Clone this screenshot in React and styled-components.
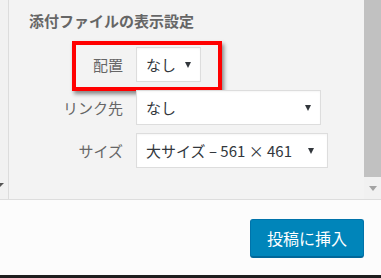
import React from 'react'
import styled, { createGlobalStyle } from 'styled-components'

const GlobalStyle = createGlobalStyle`
	html, body {
		margin: 0;
		padding: 0;
		background: #fcfcfc;
	}
	body {
		font-family: "Noto Sans CJK JP", "Noto Sans", sans-serif;
	}
`

const FrameX = styled.div`
	width: 381px;
	height: 278px;
	display: flex;
	flex-direction: column;
	overflow: hidden;
`

const TopX = styled.div`
	height: 199px;
	display: flex;
	flex-shrink: 0;
`

const SidePaneX = styled.div`
	width: 9px;
	background: #f1f1f1;
	border-right: 1px solid #dcdcdc;
	display: flex;
	flex-direction: column;
	justify-content: flex-end;
	padding-bottom: 12px;
	box-sizing: border-box;
	overflow: hidden;
`

const SideArrowX = styled.div`
	width: 0;
	height: 0;
	margin-left: -4px;
	border-left: 4px solid transparent;
	border-right: 4px solid transparent;
	border-top: 4px solid #555;
`

const SettingsX = styled.div`
	flex: 1;
	background: #f3f3f3;
	padding: 11px 0 0 20px;
`

const HeadingX = styled.h2`
	margin: 0 0 16px;
	font-size: 15px;
	line-height: 20px;
	font-weight: 700;
	color: #666;
`

const RowX = styled.div`
	position: relative;
	display: flex;
	align-items: center;
	gap: 13px;
	margin-bottom: 8px;
`

const LabelX = styled.label`
	width: 94px;
	text-align: right;
	font-size: 15px;
	color: #666;
`

const SelectX = styled.div`
	width: ${p => p.w}px;
	height: 35px;
	box-sizing: border-box;
	background: #fff;
	border: 1px solid #ddd;
	box-shadow: inset 0 1px 2px rgba(0, 0, 0, 0.04);
	display: flex;
	align-items: center;
	justify-content: space-between;
	padding: 0 ${p => p.pr}px 0 9px;
	font-size: 15px;
	color: #32373c;
	white-space: nowrap;
`

const CaretX = styled.span`
	width: 0;
	height: 0;
	border-left: 3.5px solid transparent;
	border-right: 3.5px solid transparent;
	border-top: 6px solid #32373c;
`

const HighlightX = styled.div`
	position: absolute;
	left: 43px;
	top: -6px;
	width: 150px;
	height: 50px;
	box-sizing: border-box;
	border: 4px solid #ff0000;
	box-shadow: 2px 3px 4px rgba(0, 0, 0, 0.45);
	pointer-events: none;
`

const ScrollbarX = styled.div`
	width: 17px;
	background: #f1f1f1;
	display: flex;
	flex-direction: column;
`

const ThumbX = styled.div`
	height: 177px;
	background: #c1c1c1;
`

const ScrollButtonX = styled.div`
	flex: 1;
	display: flex;
	align-items: center;
	justify-content: center;
`

const ScrollArrowX = styled.div`
	width: 0;
	height: 0;
	border-left: 4px solid transparent;
	border-right: 4px solid transparent;
	border-top: 5px solid #a3a3a3;
`

const FooterX = styled.div`
	flex: 1;
	background: #fcfcfc;
	border-top: 1px solid #dddddd;
	display: flex;
	justify-content: flex-end;
	align-items: flex-start;
	padding: 19px 17px 0 0;
`

const InsertButtonX = styled.button`
	height: 39px;
	padding: 0 16px;
	background: #0085ba;
	border: 1px solid #0073aa;
	border-bottom: 2px solid #006799;
	border-radius: 3px;
	color: #fff;
	font-family: "Noto Sans CJK JP", sans-serif;
	font-size: 16px;
	line-height: 1;
`

const BottomEdgeX = styled.div`
	height: 3px;
	background: #1e1e1e;
	flex-shrink: 0;
`

const rows = [
	{ label: '配置', value: 'なし', w: 65, pr: 9, mark: true },
	{ label: 'リンク先', value: 'なし', w: 185, pr: 9 },
	{ label: 'サイズ', value: '大サイズ – 561 × 461', w: 192, pr: 13 },
]

const App = () => (
	<>
		<GlobalStyle />
		<FrameX>
			<TopX>
				<SidePaneX>
					<SideArrowX />
				</SidePaneX>
				<SettingsX>
					<HeadingX>添付ファイルの表示設定</HeadingX>
					{rows.map(r => (
						<RowX key={r.label}>
							<LabelX>{r.label}</LabelX>
							<SelectX w={r.w} pr={r.pr}>
								<span>{r.value}</span>
								<CaretX />
							</SelectX>
							{r.mark && <HighlightX />}
						</RowX>
					))}
				</SettingsX>
				<ScrollbarX>
					<ThumbX />
					<ScrollButtonX>
						<ScrollArrowX />
					</ScrollButtonX>
				</ScrollbarX>
			</TopX>
			<FooterX>
				<InsertButtonX>投稿に挿入</InsertButtonX>
			</FooterX>
			<BottomEdgeX />
		</FrameX>
	</>
)

export default App
